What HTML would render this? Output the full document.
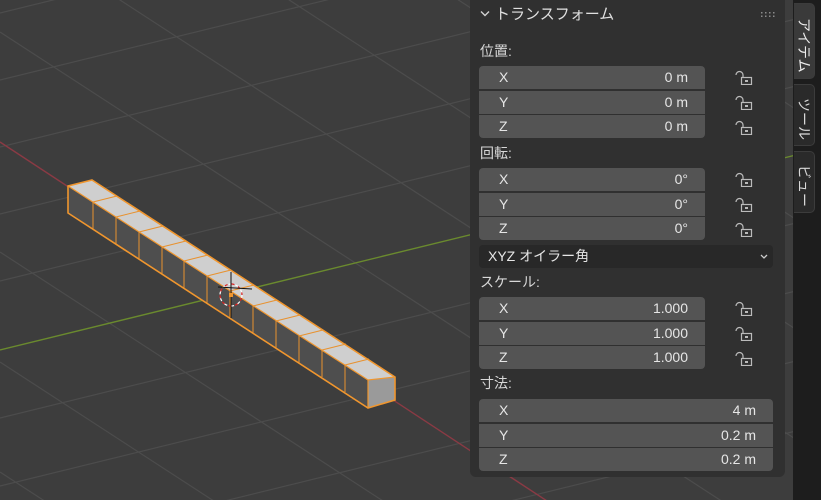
<!DOCTYPE html>
<html><head><meta charset="utf-8"><style>
*{margin:0;padding:0;box-sizing:border-box}
html,body{width:821px;height:500px;overflow:hidden}
body{background:#3d3d3d;font-family:"Liberation Sans","Noto Sans CJK JP",sans-serif;position:relative}
svg.vp{position:absolute;left:0;top:0}
.panel{position:absolute;left:470px;top:0;width:315px;height:477px;background:#303030;border-radius:0 0 6px 6px}
.t{position:absolute;color:#d8d8d8;font-size:14px;line-height:16px;white-space:nowrap}
.f{position:absolute;left:9px;height:23px;background:#545454;color:#e6e6e6;font-size:14px;line-height:23px}
.f .a{position:absolute;left:20px}
.f .v{position:absolute;right:17px}
.lock{position:absolute;left:265px}
.tabs{position:absolute;left:793px;top:0;width:28px;height:500px;background:#1d1d1d;overflow:hidden}
.tab{position:absolute;left:1px;width:21px;border-radius:0 5px 5px 0;background:#2a2a2a;border:1px solid #3c3c3c;border-left:none;color:#d8d8d8;font-size:14px;writing-mode:vertical-rl;text-orientation:sideways;text-align:center;line-height:20px;padding-top:8px}
</style></head><body>
<svg class="vp" width="821" height="500" viewBox="0 0 821 500">
<g stroke="#4c4c4c" stroke-width="1.2" fill="none">
<line x1="0" y1="13" x2="800" y2="-183"/>
<line x1="0" y1="80" x2="800" y2="-116"/>
<line x1="0" y1="147" x2="800" y2="-49"/>
<line x1="0" y1="214" x2="800" y2="18"/>
<line x1="0" y1="281" x2="800" y2="85"/>
<line x1="0" y1="418" x2="800" y2="222"/>
<line x1="0" y1="486" x2="800" y2="290"/>
<line x1="0" y1="556" x2="800" y2="360"/>
<line x1="0" y1="626" x2="800" y2="430"/>
<line x1="0" y1="32" x2="800" y2="552"/>
<line x1="0" y1="-78" x2="800" y2="442"/>
<line x1="0" y1="-188" x2="800" y2="332"/>
<line x1="0" y1="-298" x2="800" y2="222"/>
<line x1="0" y1="-408" x2="800" y2="112"/>
<line x1="0" y1="252" x2="800" y2="772"/>
<line x1="0" y1="362" x2="800" y2="882"/>
<line x1="0" y1="472" x2="800" y2="992"/>
</g>
<line x1="0" y1="142" x2="800" y2="667" stroke="#8a3a44" stroke-width="1.4"/>
<line x1="0" y1="350" x2="800" y2="154" stroke="#6a8a2e" stroke-width="1.4"/>
<polygon points="68,186 68,213 368,408 368,380" fill="#4e4e4e"/>
<polygon points="68,186 92,180 395,377 368,380" fill="#cfcfcf"/>
<polygon points="368,380 395,377 395,400 368,408" fill="#9a9a9a"/>
<g stroke="#e8912e" stroke-width="1" fill="none">
<line x1="93" y1="202" x2="93" y2="229"/><line x1="93" y1="202" x2="117" y2="196"/>
<line x1="116" y1="217" x2="116" y2="244"/><line x1="116" y1="217" x2="140" y2="211"/>
<line x1="139" y1="232" x2="139" y2="259"/><line x1="139" y1="232" x2="163" y2="226"/>
<line x1="162" y1="247" x2="162" y2="274"/><line x1="162" y1="247" x2="186" y2="241"/>
<line x1="184" y1="261" x2="184" y2="288"/><line x1="184" y1="261" x2="208" y2="255"/>
<line x1="207" y1="276" x2="207" y2="303"/><line x1="207" y1="276" x2="231" y2="270"/>
<line x1="230" y1="291" x2="230" y2="318"/><line x1="230" y1="291" x2="254" y2="285"/>
<line x1="253" y1="306" x2="253" y2="333"/><line x1="253" y1="306" x2="277" y2="300"/>
<line x1="276" y1="321" x2="276" y2="348"/><line x1="276" y1="321" x2="300" y2="315"/>
<line x1="299" y1="336" x2="299" y2="363"/><line x1="299" y1="336" x2="323" y2="330"/>
<line x1="322" y1="350" x2="322" y2="377"/><line x1="322" y1="350" x2="346" y2="344"/>
<line x1="345" y1="365" x2="345" y2="392"/><line x1="345" y1="365" x2="369" y2="359"/>
</g>
<polygon points="68,213 68,186 92,180 395,377 395,400 368,408" fill="none" stroke="#f0962e" stroke-width="1.6"/>
<polyline points="68,186 368,380 395,377" fill="none" stroke="#f0962e" stroke-width="1.2"/>
<line x1="368" y1="380" x2="368" y2="408" stroke="#f0962e" stroke-width="1.2"/>
<circle cx="231" cy="295" r="11" fill="none" stroke="#fff" stroke-width="1.2" stroke-dasharray="4 3"/>
<circle cx="231" cy="295" r="11" fill="none" stroke="#d22" stroke-width="1.2" stroke-dasharray="3 4" stroke-dashoffset="4"/>
<line x1="231" y1="272" x2="231" y2="318" stroke="#111" stroke-width="1"/>
<line x1="218" y1="287" x2="252" y2="289" stroke="#111" stroke-width="1"/>
<rect x="229" y="293" width="4" height="4" fill="#f0962e"/>
</svg>
<div class="panel">
<svg style="position:absolute;left:10px;top:10px" width="10" height="8"><path d="M1 1.5 L5 5.5 L9 1.5" stroke="#d0d0d0" stroke-width="1.4" fill="none"/></svg>
<div class="t" style="left:25px;top:7px;font-size:15px;color:#e0e0e0">トランスフォーム</div>
<svg style="position:absolute;left:291px;top:12px" width="14" height="6"><g fill="#8a8a8a"><rect x="0" y="0" width="1.5" height="1.5"/><rect x="4" y="0" width="1.5" height="1.5"/><rect x="8" y="0" width="1.5" height="1.5"/><rect x="12" y="0" width="1.5" height="1.5"/><rect x="0" y="3.5" width="1.5" height="1.5"/><rect x="4" y="3.5" width="1.5" height="1.5"/><rect x="8" y="3.5" width="1.5" height="1.5"/><rect x="12" y="3.5" width="1.5" height="1.5"/></g></svg>
<div class="t" style="left:10px;top:43px">位置:</div>
<div class="f" style="top:66px;width:226px;border-radius:4px 4px 0 0"><span class="a">X</span><span class="v">0 m</span></div>
<div class="f" style="top:91px;width:226px"><span class="a">Y</span><span class="v">0 m</span></div>
<div class="f" style="top:115px;width:226px;border-radius:0 0 4px 4px"><span class="a">Z</span><span class="v">0 m</span></div>
<div class="t" style="left:10px;top:145px">回転:</div>
<div class="f" style="top:168px;width:226px;border-radius:4px 4px 0 0"><span class="a">X</span><span class="v">0°</span></div>
<div class="f" style="top:193px;width:226px"><span class="a">Y</span><span class="v">0°</span></div>
<div class="f" style="top:217px;width:226px;border-radius:0 0 4px 4px"><span class="a">Z</span><span class="v">0°</span></div>
<div class="f" style="top:245px;width:294px;background:#282828;border-radius:4px"><span style="position:absolute;left:9px;color:#e6e6e6">XYZ オイラー角</span><svg style="position:absolute;right:5px;top:9px" width="8" height="6"><path d="M1 1 L4 4 L7 1" stroke="#ccc" stroke-width="1.3" fill="none"/></svg></div>
<div class="t" style="left:10px;top:274px">スケール:</div>
<div class="f" style="top:297px;width:226px;border-radius:4px 4px 0 0"><span class="a">X</span><span class="v">1.000</span></div>
<div class="f" style="top:322px;width:226px"><span class="a">Y</span><span class="v">1.000</span></div>
<div class="f" style="top:346px;width:226px;border-radius:0 0 4px 4px"><span class="a">Z</span><span class="v">1.000</span></div>
<div class="t" style="left:10px;top:375px">寸法:</div>
<div class="f" style="top:399px;width:294px;border-radius:4px 4px 0 0"><span class="a">X</span><span class="v">4 m</span></div>
<div class="f" style="top:424px;width:294px"><span class="a">Y</span><span class="v">0.2 m</span></div>
<div class="f" style="top:448px;width:294px;border-radius:0 0 4px 4px"><span class="a">Z</span><span class="v">0.2 m</span></div>
<svg class="lock" style="top:69px" width="18" height="16"><path d="M1 6 A3.5 3.5 0 0 1 8 6 V8" stroke="#bbb" stroke-width="1.2" fill="none"/><rect x="6.5" y="8.5" width="10" height="7" stroke="#bbb" stroke-width="1.2" fill="none"/><rect x="10" y="11" width="3" height="2" fill="#bbb"/></svg>
<svg class="lock" style="top:94px" width="18" height="16"><path d="M1 6 A3.5 3.5 0 0 1 8 6 V8" stroke="#bbb" stroke-width="1.2" fill="none"/><rect x="6.5" y="8.5" width="10" height="7" stroke="#bbb" stroke-width="1.2" fill="none"/><rect x="10" y="11" width="3" height="2" fill="#bbb"/></svg>
<svg class="lock" style="top:119px" width="18" height="16"><path d="M1 6 A3.5 3.5 0 0 1 8 6 V8" stroke="#bbb" stroke-width="1.2" fill="none"/><rect x="6.5" y="8.5" width="10" height="7" stroke="#bbb" stroke-width="1.2" fill="none"/><rect x="10" y="11" width="3" height="2" fill="#bbb"/></svg>
<svg class="lock" style="top:171px" width="18" height="16"><path d="M1 6 A3.5 3.5 0 0 1 8 6 V8" stroke="#bbb" stroke-width="1.2" fill="none"/><rect x="6.5" y="8.5" width="10" height="7" stroke="#bbb" stroke-width="1.2" fill="none"/><rect x="10" y="11" width="3" height="2" fill="#bbb"/></svg>
<svg class="lock" style="top:196px" width="18" height="16"><path d="M1 6 A3.5 3.5 0 0 1 8 6 V8" stroke="#bbb" stroke-width="1.2" fill="none"/><rect x="6.5" y="8.5" width="10" height="7" stroke="#bbb" stroke-width="1.2" fill="none"/><rect x="10" y="11" width="3" height="2" fill="#bbb"/></svg>
<svg class="lock" style="top:221px" width="18" height="16"><path d="M1 6 A3.5 3.5 0 0 1 8 6 V8" stroke="#bbb" stroke-width="1.2" fill="none"/><rect x="6.5" y="8.5" width="10" height="7" stroke="#bbb" stroke-width="1.2" fill="none"/><rect x="10" y="11" width="3" height="2" fill="#bbb"/></svg>
<svg class="lock" style="top:300px" width="18" height="16"><path d="M1 6 A3.5 3.5 0 0 1 8 6 V8" stroke="#bbb" stroke-width="1.2" fill="none"/><rect x="6.5" y="8.5" width="10" height="7" stroke="#bbb" stroke-width="1.2" fill="none"/><rect x="10" y="11" width="3" height="2" fill="#bbb"/></svg>
<svg class="lock" style="top:325px" width="18" height="16"><path d="M1 6 A3.5 3.5 0 0 1 8 6 V8" stroke="#bbb" stroke-width="1.2" fill="none"/><rect x="6.5" y="8.5" width="10" height="7" stroke="#bbb" stroke-width="1.2" fill="none"/><rect x="10" y="11" width="3" height="2" fill="#bbb"/></svg>
<svg class="lock" style="top:350px" width="18" height="16"><path d="M1 6 A3.5 3.5 0 0 1 8 6 V8" stroke="#bbb" stroke-width="1.2" fill="none"/><rect x="6.5" y="8.5" width="10" height="7" stroke="#bbb" stroke-width="1.2" fill="none"/><rect x="10" y="11" width="3" height="2" fill="#bbb"/></svg>
</div>
<div class="tabs">
<div class="tab" style="top:3px;height:76px;background:#3a3a3a;color:#ececec">アイテム</div>
<div class="tab" style="top:84px;height:62px">ツール</div>
<div class="tab" style="top:151px;height:62px">ビュー</div>
</div>
</body></html>
